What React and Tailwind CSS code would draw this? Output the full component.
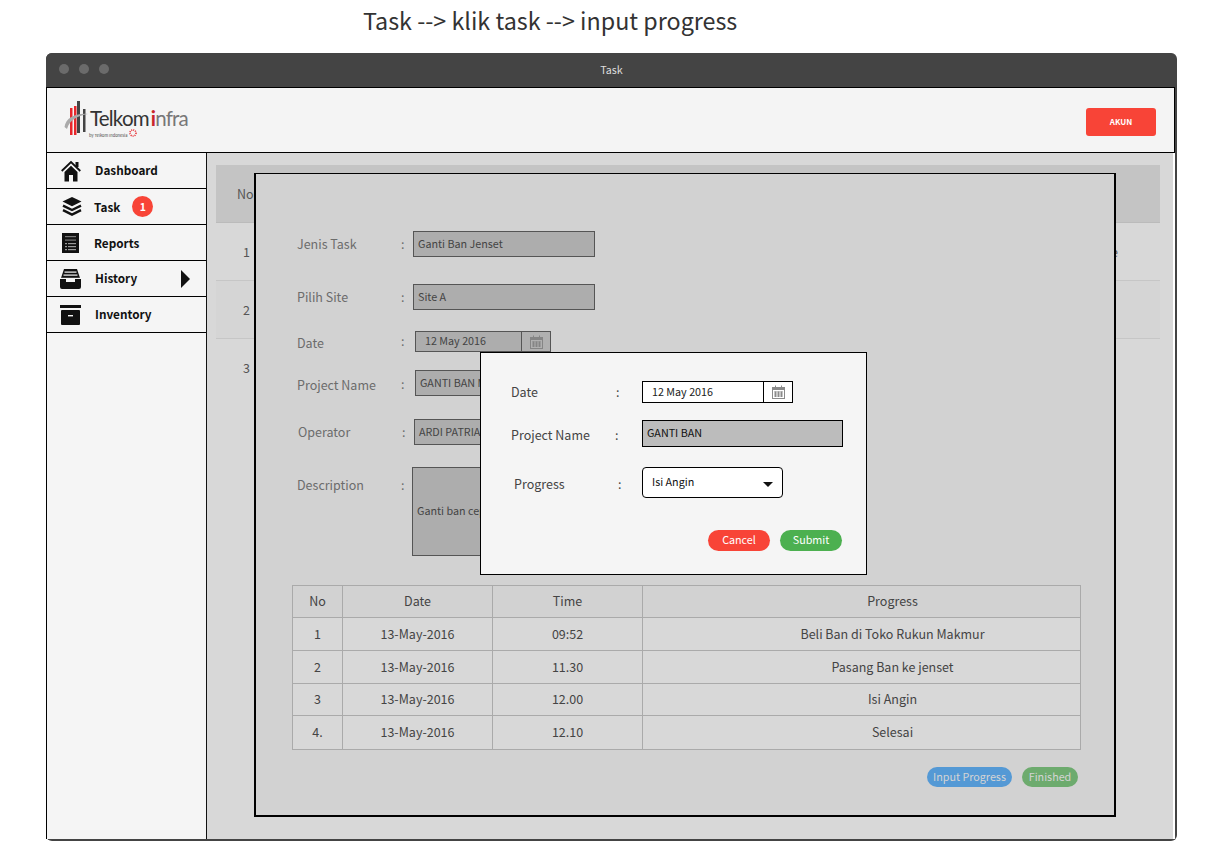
import React from "react";

const font = "font-['Noto_Sans_CJK_SC','Noto_Sans',sans-serif]";

const HomeIcon = () => (
  <svg width="20" height="22" viewBox="0 0 20 22">
    <path d="M0.7 11 L10 2 L19.3 11" fill="none" stroke="#111" strokeWidth="1.8" />
    <rect x="14.5" y="2" width="3" height="5" fill="#111" />
    <path d="M3.5 12 L10 5.8 L16.5 12 V21.5 H12 V15 H8 V21.5 H3.5 Z" fill="#111" />
  </svg>
);

const LayersIcon = () => (
  <svg width="20" height="19" viewBox="0 0 20 19">
    <path d="M10 0 L19.5 4.6 L10 9.2 L0.5 4.6 Z" fill="#111" />
    <path d="M1 8.6 L10 13 L19 8.6" fill="none" stroke="#111" strokeWidth="2.4" />
    <path d="M1 13.2 L10 17.6 L19 13.2" fill="none" stroke="#111" strokeWidth="2.4" />
  </svg>
);

const ReportsIcon = () => (
  <svg width="17" height="20" viewBox="0 0 17 20">
    <rect width="17" height="20" fill="#111" />
    <rect x="3" y="3" width="11" height="1.2" fill="#777" />
    <rect x="3" y="6.5" width="11" height="1.2" fill="#777" />
    <rect x="3" y="10" width="2" height="1.2" fill="#999" />
    <rect x="6" y="10" width="8" height="1.2" fill="#999" />
    <rect x="3" y="13" width="2" height="1.2" fill="#999" />
    <rect x="6" y="13" width="8" height="1.2" fill="#999" />
    <rect x="3" y="16" width="2" height="1.2" fill="#999" />
    <rect x="6" y="16" width="8" height="1.2" fill="#999" />
  </svg>
);

const HistoryIcon = () => (
  <svg width="21" height="20" viewBox="0 0 21 20">
    <path d="M4 0 H17 L20 9 H1 Z" fill="#111" />
    <rect x="4.5" y="2.5" width="12" height="1.2" fill="#f5f5f5" />
    <rect x="3.5" y="5.5" width="14" height="1.2" fill="#f5f5f5" />
    <path d="M0 10 H6 V13 H15 V10 H21 V18 a2 2 0 0 1 -2 2 H2 a2 2 0 0 1 -2 -2 Z" fill="#111" />
    <rect x="1" y="8.8" width="19" height="1.2" fill="#f5f5f5" />
  </svg>
);

const InventoryIcon = () => (
  <svg width="21" height="20" viewBox="0 0 21 20">
    <rect x="0" y="0" width="21" height="3" fill="#111" />
    <rect x="1" y="5" width="19" height="15" rx="1" fill="#111" />
    <rect x="8" y="10" width="5" height="1.4" fill="#f5f5f5" />
  </svg>
);

const Logo = () => (
  <div className="-mt-[2px] flex items-start">
    <svg width="26" height="36" viewBox="0 0 26 36" className="shrink-0">
      <rect x="6" y="7" width="2.5" height="27" fill="#e8262b" />
      <rect x="10" y="5" width="2.5" height="29" fill="#e8262b" />
      <rect x="13" y="0" width="3" height="32" fill="#444" />
      <rect x="19" y="8" width="2.5" height="23" fill="#444" />
      <path d="M0.5 26 C2 17 11 12 24 13 C14 15 6 18 3 28 Z" fill="#aaa" />
    </svg>
    <div className="flex flex-col items-start leading-none">
      <div className="mt-[5px] h-[24px] whitespace-nowrap font-['Lato',sans-serif] text-[20.5px] leading-[24px] tracking-[-0.8px] text-[#333]">
        Telkom<span className="ml-[2px] font-bold text-[#c9252b]">i</span><span className="text-[#777]">nfra</span>
      </div>
      <div className="ml-[-1px] mt-[2px] flex items-center whitespace-nowrap text-[4px] leading-[6px] text-[#444]">
        by Telkom Indonesia
        <svg width="10" height="10" viewBox="0 0 10 10" className="ml-[1px] mt-[-4px]">
          <circle cx="5" cy="5" r="3" fill="none" stroke="#e8262b" strokeWidth="1.6" strokeDasharray="1 1" />
        </svg>
      </div>
    </div>
  </div>
);

const navItems = [
  { label: "Dashboard", icon: <HomeIcon />, iconBox: "pl-[14px] w-[48px]", labelClass: "pb-[2px]" },
  { label: "Task", icon: <LayersIcon />, iconBox: "pl-[15px] w-[47px]", badge: true },
  { label: "Reports", icon: <ReportsIcon />, iconBox: "pl-[15px] w-[47px]" },
  { label: "History", icon: <HistoryIcon />, iconBox: "pl-[13px] w-[48px]", labelClass: "pb-[2px]", arrow: true },
  { label: "Inventory", icon: <InventoryIcon />, iconBox: "pl-[13px] w-[48px]", labelClass: "pb-[2px]" },
];

const Sidebar = () => (
  <aside className="w-[160px] shrink-0 border-r border-[#111] bg-[#f5f5f5]">
    {navItems.map((item) => (
      <div key={item.label} className="relative flex h-[36px] items-center border-b border-black text-[11.75px] font-bold text-[#111]">
        <div className={`flex items-center ${item.iconBox}`}>{item.icon}</div>
        <span className={item.labelClass}>{item.label}</span>
        {item.badge && (
          <span className="ml-[12px] flex h-[21px] w-[21px] items-center justify-center rounded-full bg-[#f84437] text-[10.5px] text-white">1</span>
        )}
        {item.arrow && (
          <svg width="9" height="18" viewBox="0 0 9 18" className="absolute right-[16px]">
            <path d="M0 0 L9 9 L0 18 Z" fill="#111" />
          </svg>
        )}
      </div>
    ))}
  </aside>
);

const CalendarIcon = ({ color = "#8a8a8a" }) => (
  <svg width="13" height="14" viewBox="0 0 13 14">
    <rect x="0.5" y="2.5" width="12" height="11" fill="none" stroke={color} />
    <rect x="0.5" y="2.5" width="12" height="2.5" fill={color} />
    <rect x="3" y="0.5" width="1" height="2" fill={color} />
    <rect x="9" y="0.5" width="1" height="2" fill={color} />
    <path d="M2 7h9M2 9h9M2 11h9M3.5 6.5v5.5M6.5 6.5v5.5M9.5 6.5v5.5" stroke={color} strokeWidth="1" />
  </svg>
);

const Row = ({ label, labelClass = "", colonClass = "", children, className = "" }) => (
  <div className={`flex items-center ${className}`}>
    <span className={`w-[104px] text-[12.5px] text-[#6c6c6c] ${labelClass}`}>{label}</span>
    <span className={`w-[12px] text-[12.5px] text-[#6c6c6c] ${colonClass}`}>:</span>
    {children}
  </div>
);

const tableRows = [
  { cells: ["No", "Date", "Time", "Progress"], rowClass: "h-[32px]" },
  { cells: ["1", "13-May-2016", "09:52", "Beli Ban di Toko Rukun Makmur"], rowClass: "h-[33px] bg-[#d8d8d8]" },
  { cells: ["2", "13-May-2016", "11.30", "Pasang Ban ke jenset"], rowClass: "h-[33px] bg-[#d8d8d8]" },
  { cells: ["3", "13-May-2016", "12.00", "Isi Angin"], rowClass: "h-[32px] bg-[#d8d8d8]" },
  { cells: ["4.", "13-May-2016", "12.10", "Selesai"], rowClass: "h-[34px] bg-[#d8d8d8]" },
];

const ProgressTable = () => (
  <div className="ml-[36px] mt-[29px] w-[789px] border-t border-l border-[#aaa] text-[12.5px] text-[#444]">
    {tableRows.map((row, i) => (
      <div key={i} className={`grid grid-cols-[50px_150px_150px_1fr] ${row.rowClass}`}>
        {row.cells.map((cell, j) => (
          <div
            key={j}
            className={`flex items-center justify-center border-r border-b border-[#aaa] ${j === 3 ? "pl-[62px]" : ""}`}
          >
            {cell}
          </div>
        ))}
      </div>
    ))}
  </div>
);

const fieldClass = "flex items-center border border-[#555] bg-[#adadad] pl-[4px] text-[10.75px] text-[#444] whitespace-nowrap overflow-hidden";

const TaskModal = () => (
  <div className="absolute left-[47px] top-[20px] h-[644px] w-[862px] border-x-2 border-t border-b-2 border-black bg-[#d2d2d2] pt-[57px]">
    <div className="pl-[41px]">
      <Row label="Jenis Task" className="h-[26px]" labelClass="pt-[1px]">
        <div className={`h-[26px] w-[182px] ${fieldClass}`}>Ganti Ban Jenset</div>
      </Row>
      <Row label="Pilih Site" className="mt-[27px] h-[26px]" labelClass="pt-[1px]">
        <div className={`h-[26px] w-[182px] ${fieldClass}`}>Site A</div>
      </Row>
      <Row label="Date" className="mt-[21px] h-[21px]" colonClass="w-[14px]" labelClass="pt-[3px]">
        <div className="flex h-[21px] w-[136px] border border-[#555] bg-[#adadad] text-[10.75px] text-[#444]">
          <div className="flex w-[106px] items-center border-r border-[#555] pl-[9px]">12 May 2016</div>
          <div className="flex flex-1 items-center justify-center bg-[#b0b0b0]"><CalendarIcon color="#858585" /></div>
        </div>
      </Row>
      <Row label="Project Name" className="mt-[18px] h-[26px]" colonClass="w-[14px] pt-[3px]" labelClass="pt-[4px]">
        <div className={`h-[26px] w-[180px] ${fieldClass}`}>GANTI BAN MOBIL</div>
      </Row>
      <Row label="Operator" labelClass="ml-[1px] w-[103px]" className="mt-[23px] h-[26px]">
        <div className={`h-[26px] w-[180px] ${fieldClass}`}>ARDI PATRIA</div>
      </Row>
      <div className="mt-[22px] flex items-start">
        <span className="mt-[9px] w-[104px] text-[12.5px] text-[#6c6c6c]">Description</span>
        <span className="mt-[9px] w-[11px] text-[12.5px] text-[#6c6c6c]">:</span>
        <div className={`h-[89px] w-[180px] ${fieldClass}`}>Ganti ban cepat</div>
      </div>
    </div>
    <ProgressTable />
    <div className="mt-[17px] flex justify-end gap-[10px] pr-[36px] text-[10.75px] text-[#d4d4d4]">
      <span className="flex h-[20px] w-[85px] items-center justify-center rounded-full bg-[#5499d5]">Input Progress</span>
      <span className="flex h-[20px] w-[56px] items-center justify-center rounded-full bg-[#6dab6e]">Finished</span>
    </div>
  </div>
);

const ProgressModal = () => (
  <div className="absolute left-[273px] top-[199px] h-[223px] w-[387px] border border-black bg-[#f5f5f5] pt-[28px] pl-[30px] text-[12.5px] text-[#444]">
    <div className="flex h-[22px] items-center">
      <span className="w-[105px] pt-[1px]">Date</span>
      <span className="w-[26px] pt-[1px]">:</span>
      <div className="flex h-[22px] w-[151px] border border-black bg-white text-[10.75px] text-[#222]">
        <div className="flex w-[121px] items-center border-r border-black pl-[9px]">12 May 2016</div>
        <div className="flex flex-1 items-center justify-center"><CalendarIcon /></div>
      </div>
    </div>
    <div className="mt-[17px] flex h-[27px] items-center">
      <span className="w-[104px] pt-[4px]">Project Name</span>
      <span className="w-[27px] pt-[4px]">:</span>
      <div className="flex h-[27px] w-[201px] items-center border border-black bg-[#bcbcbc] pl-[4px] text-[10.75px] text-[#111]">GANTI BAN</div>
    </div>
    <div className="mt-[20px] flex h-[31px] items-center">
      <span className="ml-[3px] w-[104px] pt-[4px]">Progress</span>
      <span className="w-[24px] pt-[4px]">:</span>
      <div className="flex h-[31px] w-[141px] items-center justify-between rounded-[4px] border border-black bg-white pl-[9px] pr-[9px] text-[10.75px] text-[#111]">
        <span className="-mt-[1px]">Isi Angin</span>
        <svg width="10" height="5" viewBox="0 0 10 5" className="mt-[3px]">
          <path d="M0 0 H10 L5 5 Z" fill="#111" />
        </svg>
      </div>
    </div>
    <div className="mt-[32px] flex justify-end gap-[10px] pr-[24px] text-[10.75px] text-white">
      <button className="h-[21px] w-[62px] rounded-full bg-[#f84437]">Cancel</button>
      <button className="h-[21px] w-[62px] rounded-full bg-[#4cb050]">Submit</button>
    </div>
  </div>
);

const App = () => {
  return (
    <div className={`h-[868px] w-[1209px] overflow-hidden bg-white ${font}`}>
      <div className="flex h-[42px] items-center pl-[363px] text-[23.3px] leading-none text-[#333]">
        Task --&gt; klik task --&gt; input progress
      </div>
      <div className="ml-[46px] mt-[11px] flex h-[788px] w-[1131px] flex-col rounded-[6px] border-r-2 border-b-2 border-[#444] bg-[#444]">
        <div className="relative flex h-[34px] shrink-0 items-center justify-center rounded-t-[6px] bg-[#444] pl-[2px] text-[10.75px] text-[#ddd]">
          <div className="absolute left-[13px] top-[11px] flex gap-[10px]">
            <span className="h-[10px] w-[10px] rounded-full bg-[#6b6b6b]" />
            <span className="h-[10px] w-[10px] rounded-full bg-[#6b6b6b]" />
            <span className="h-[10px] w-[10px] rounded-full bg-[#6b6b6b]" />
          </div>
          Task
        </div>
        <header className="flex h-[66px] shrink-0 items-center justify-between border border-black bg-[#f4f4f4] pl-[17px] pr-[18px]">
          <Logo />
          <button className="mt-[4px] h-[28px] w-[70px] rounded-[3px] bg-[#f84437] text-[8px] font-bold text-white">AKUN</button>
        </header>
        <div className="flex min-h-0 flex-1 border-l border-black">
          <Sidebar />
          <main className="relative flex-1 border-r-2 border-white bg-[#d8d8d8] pl-[9px] pr-[13px] pt-[12px] text-[12.5px] text-[#555]">
            <div className="flex h-[58px] items-center border-b border-[#bbb] bg-[#c4c4c4] pl-[21px] pt-[1px]">No</div>
            <div className="flex h-[58px] items-center justify-between border-b border-[#c6c6c6] pl-[27px] pr-[42px] pt-[1px]">
              <span>1</span>
              <span>e</span>
            </div>
            <div className="flex h-[58px] items-center border-b border-[#c6c6c6] bg-[#d5d5d5] pl-[27px] pt-[1px]">2</div>
            <div className="flex h-[58px] items-center pl-[27px]">3</div>
            <TaskModal />
            <ProgressModal />
          </main>
        </div>
      </div>
    </div>
  );
};

export default App;
